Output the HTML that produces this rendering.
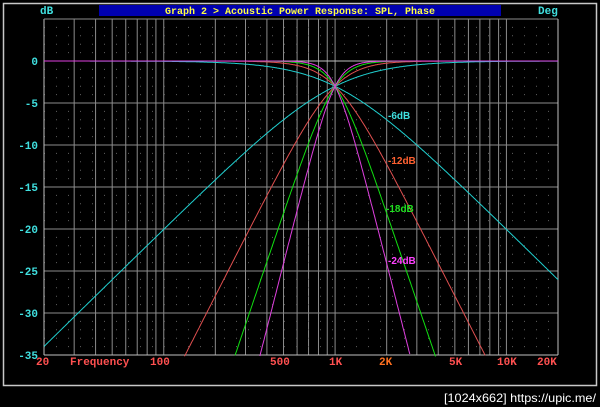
<!DOCTYPE html>
<html><head><meta charset="utf-8"><style>
html,body{margin:0;padding:0;background:#000;width:600px;height:407px;overflow:hidden}
svg{display:block}
.m{font-family:"Liberation Mono",monospace;font-weight:bold;font-size:11px}
.s{font-family:"Liberation Sans",sans-serif;font-weight:bold;font-size:10px}
</style></head><body>
<svg id="g" width="600" height="407" xmlns="http://www.w3.org/2000/svg">
<rect x="3.5" y="3.5" width="593" height="382" fill="none" stroke="#c8c8c8" stroke-width="1.5"/>
<rect x="99" y="5" width="402" height="11" fill="#0000b0"/>
<text x="300" y="14" text-anchor="middle" class="m" fill="#ffff40" style="font-size:10px">Graph 2 &gt; Acoustic Power Response: SPL, Phase</text>
<text x="40" y="14" class="m" fill="#40e0e0">dB</text>
<text x="538" y="14" class="m" fill="#40e0e0">Deg</text>
<g id="grid"></g>
<g id="curves" fill="none" stroke-width="1"></g>
<g class="m" fill="#40e0e0" text-anchor="end" id="yl"></g>
<g class="m" fill="#ff5050">
<text x="36" y="365">20</text>
<text x="70" y="365">Frequency</text>
<text x="150" y="365">100</text>
<text x="270" y="365">500</text>
<text x="329" y="365">1K</text>
<text x="379" y="365" fill="#ff7020">2K</text>
<text x="449" y="365">5K</text>
<text x="497" y="365">10K</text>
<text x="537" y="365">20K</text>
</g>
<text x="388" y="119" class="s" fill="#40e0e0">-6dB</text>
<text x="388" y="164" class="s" fill="#ff6030">-12dB</text>
<text x="386" y="212" class="s" fill="#20e020">-18dB</text>
<text x="388" y="264" class="s" fill="#ff40ff">-24dB</text>
<text x="596" y="402" text-anchor="end" font-family="Liberation Sans,sans-serif" font-size="12" fill="#fff" textLength="152" lengthAdjust="spacingAndGlyphs">[1024x662] https://upic.me/</text>
</svg>
<script>
var ns="http://www.w3.org/2000/svg";
var L=44,R=558,T=19,B=355;
function X(f){return L+(R-L)*Math.log10(f/20)/3;}
function Y(d){return 61-d*8.4;}
function el(p,t,a){var e=document.createElementNS(ns,t);for(var k in a)e.setAttribute(k,a[k]);p.appendChild(e);return e;}
var g=document.getElementById('grid');
var fs=[];for(var dec=10;dec<=10000;dec*=10)for(var k=1;k<10;k++){var f=k*dec;if(f>=20&&f<=20000)fs.push(f);}
fs.push(20000);
fs.forEach(function(f){var x=X(f);el(g,'line',{x1:x,x2:x,y1:T,y2:B,stroke:'#8c8c8c','stroke-width':1});});
for(var d=5;d>=-35;d-=5){var y=Y(d);if(y<T)continue;el(g,'line',{x1:L,x2:R,y1:y,y2:y,stroke:d==0?'#c0c0c0':'#8c8c8c','stroke-width':1});}
for(var d=7;d>=-35;d--){if(d%5==0)continue;var y=Y(d);if(y<T)continue;el(g,'line',{x1:L,x2:R,y1:y,y2:y,stroke:'#606060','stroke-width':1,'stroke-dasharray':'1 11'});}
el(g,'line',{x1:L,x2:L,y1:T,y2:B,stroke:'#c0c0c0'});
el(g,'line',{x1:L,x2:R,y1:B,y2:B,stroke:'#c0c0c0'});
el(g,'line',{x1:L,x2:R,y1:T,y2:T,stroke:'#8c8c8c'});
el(g,'line',{x1:R,x2:R,y1:T,y2:B,stroke:'#c0c0c0'});
var yl=document.getElementById('yl');
for(var d=0;d>=-35;d-=5){var t=el(yl,'text',{x:38,y:Y(d)+4});t.textContent=d==0?'0':String(d);}
var c=document.getElementById('curves');
var cols=['#20d0d0','#e05050','#10e010','#e040e0'];
for(var n=1;n<=4;n++){
 ['lp','hp'].forEach(function(tp){
  var pts=[];
  for(var i=0;i<=600;i++){var f=20*Math.pow(1000,i/600);var r=f/1000;if(tp=='hp')r=1/r;
   var db=-10*Math.log10(1+Math.pow(r,2*n));if(db<-35.2)continue;pts.push(X(f).toFixed(1)+','+Y(db).toFixed(1));}
  el(c,'polyline',{points:pts.join(' '),stroke:cols[n-1]});
 });
}
</script>
</body></html>
